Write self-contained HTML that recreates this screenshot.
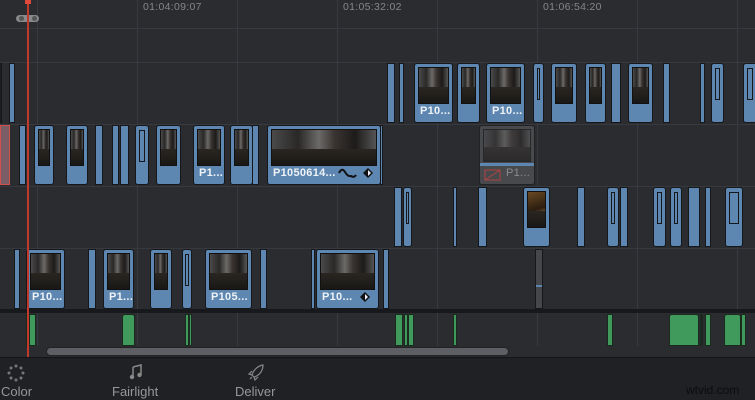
<!DOCTYPE html>
<html><head><meta charset="utf-8"><style>
*{margin:0;padding:0;box-sizing:border-box}
body{width:755px;height:400px;overflow:hidden;background:#2b2c30;position:relative;font-family:"Liberation Sans",sans-serif}
.a{position:absolute}
.g{position:absolute;top:0;width:1px;height:346px;background:#393a3f}
.h{position:absolute;left:0;width:755px;height:1px;background:#38393e}
.tc{position:absolute;top:1px;font-size:10.5px;color:#85868a;letter-spacing:.3px}
.c{position:absolute;background:#5d86b0;border:1px solid #15171b;border-radius:3px;height:60px}
.b{position:absolute;background:#5d86b0;border:1px solid #15171b;height:60px}
.t4{top:63px}.t3{top:125px}.t2{top:187px}.t1{top:249px}
.th{position:absolute;left:3px;right:3px;top:3px;height:37px;border:1px solid #111;background:linear-gradient(90deg,#4a4a4b 0%,#2a2827 25%,#6b6a68 45%,#3a3431 60%,#1d1b1a 80%,#555 100%)}
.th::after{content:"";position:absolute;left:0;right:0;bottom:0;height:45%;background:linear-gradient(#2a2622,#1a1816)}
.in{position:absolute;left:3px;right:3px;top:4px;height:32px;border:1px solid #15171b}
.l{position:absolute;left:5px;top:41px;color:#eef2f6;font-size:11px;font-weight:bold;letter-spacing:.3px}
.gr{position:absolute;top:314px;height:32px;background:#3f9a5c;border:1px solid #1a2a1e}
.nav{position:absolute;top:384px;font-size:13px;color:#96979b}
</style></head><body>
<div class="g" style="left:37px"></div><div class="g" style="left:137px"></div><div class="g" style="left:237px"></div><div class="g" style="left:337px"></div><div class="g" style="left:437px"></div><div class="g" style="left:537px"></div><div class="g" style="left:637px"></div><div class="g" style="left:737px"></div>
<div class="h" style="top:28px"></div><div class="h" style="top:62px"></div><div class="h" style="top:124px"></div><div class="h" style="top:186px"></div><div class="h" style="top:248px"></div>
<div class="tc" style="left:143px">01:04:09:07</div>
<div class="tc" style="left:343px">01:05:32:02</div>
<div class="tc" style="left:543px">01:06:54:20</div>
<div class="a" style="left:16px;top:15px;width:23px;height:7px;border-radius:4px;background:#88898c"></div>
<div class="a" style="left:19px;top:16px;width:5px;height:5px;border-radius:3px;background:#555"></div>
<div class="a" style="left:32px;top:16px;width:5px;height:5px;border-radius:3px;background:#555"></div>

<div class="b t4" style="left:-2px;width:4px;background:#1c1d20"></div>
<div class="b t4" style="left:9px;width:6px"></div>
<div class="b t4" style="left:387px;width:8px"></div>
<div class="b t4" style="left:399px;width:5px"></div>
<div class="c t4" style="left:414px;width:39px"><div class="th"></div><div class="l">P10...</div></div>
<div class="c t4" style="left:457px;width:23px"><div class="th"></div></div>
<div class="c t4" style="left:486px;width:39px"><div class="th"></div><div class="l">P10...</div></div>
<div class="c t4" style="left:533px;width:11px"><div class="in"></div></div>
<div class="c t4" style="left:551px;width:26px"><div class="th"></div></div>
<div class="c t4" style="left:585px;width:21px"><div class="th"></div></div>
<div class="b t4" style="left:611px;width:10px"></div>
<div class="c t4" style="left:628px;width:25px"><div class="th"></div></div>
<div class="b t4" style="left:663px;width:7px"></div>
<div class="b t4" style="left:700px;width:5px"></div>
<div class="c t4" style="left:711px;width:13px"><div class="in"></div></div>
<div class="c t4" style="left:743px;width:14px"><div class="in"></div></div>

<div class="b t3" style="left:0;width:10px;background:#7b5d66;border-color:#d05050"></div>
<div class="b t3" style="left:19px;width:7px"></div>
<div class="c t3" style="left:34px;width:20px"><div class="th"></div></div>
<div class="c t3" style="left:66px;width:22px"><div class="th"></div></div>
<div class="b t3" style="left:95px;width:8px"></div>
<div class="b t3" style="left:112px;width:7px"></div>
<div class="b t3" style="left:120px;width:9px"></div>
<div class="c t3" style="left:135px;width:14px"><div class="in"></div></div>
<div class="c t3" style="left:156px;width:25px"><div class="th"></div></div>
<div class="c t3" style="left:193px;width:32px"><div class="th"></div><div class="l">P1...</div></div>
<div class="c t3" style="left:230px;width:23px"><div class="th"></div></div>
<div class="b t3" style="left:252px;width:7px"></div>
<div class="c t3" style="left:267px;width:114px"><div class="th"></div><div class="l">P1050614...</div>
<svg class="a" style="left:70px;top:41px" width="20" height="14" viewBox="0 0 20 14"><path d="M1 6 Q4 0 7 5 T13 9 Q16 11 18 8" stroke="#111" stroke-width="2" fill="none"/></svg>
<svg class="a" style="left:94px;top:41px" width="12" height="12" viewBox="0 0 12 12"><path d="M6 1 L11 6 L6 11 L1 6Z" fill="#111"/><path d="M6 3 L9 6 L6 9Z" fill="#eef"/></svg></div>
<div class="b t3" style="left:380px;width:3px"></div>
<div class="c t3" style="left:479px;width:56px;background:#48494d;border-color:#222"><div class="th" style="opacity:.6;height:33px"></div><div class="a" style="left:0;right:0;top:37px;height:3px;background:#5d86b0"></div>
<svg class="a" style="left:4px;top:43px" width="18" height="12"><rect x="1" y="1" width="15" height="10" fill="none" stroke="#b04444"/><path d="M1 11 L16 1" stroke="#b04444"/></svg><div class="l" style="left:26px;color:#8a8b8f;font-weight:normal">P1...</div></div>

<div class="b t2" style="left:394px;width:8px"></div>
<div class="c t2" style="left:403px;width:9px"><div class="in" style="left:2px;right:2px"></div></div>
<div class="b t2" style="left:453px;width:4px"></div>
<div class="b t2" style="left:478px;width:9px"></div>
<div class="c t2" style="left:523px;width:27px"><div class="th" style="background:linear-gradient(160deg,#6b4a22,#2b1d10 50%,#8c6a3a 70%,#1c140c)"></div></div>
<div class="b t2" style="left:577px;width:8px"></div>
<div class="c t2" style="left:607px;width:12px"><div class="in"></div></div>
<div class="b t2" style="left:620px;width:8px"></div>
<div class="c t2" style="left:653px;width:13px"><div class="in"></div></div>
<div class="c t2" style="left:670px;width:12px"><div class="in"></div></div>
<div class="b t2" style="left:688px;width:12px"></div>
<div class="b t2" style="left:705px;width:6px"></div>
<div class="c t2" style="left:725px;width:18px"><div class="in"></div></div>

<div class="b t1" style="left:14px;width:6px"></div>
<div class="c t1" style="left:26px;width:39px"><div class="th"></div><div class="l">P10...</div></div>
<div class="b t1" style="left:88px;width:8px"></div>
<div class="c t1" style="left:103px;width:31px"><div class="th"></div><div class="l">P1...</div></div>
<div class="c t1" style="left:150px;width:22px"><div class="th"></div></div>
<div class="c t1" style="left:182px;width:10px"><div class="in" style="left:2px;right:2px"></div></div>
<div class="c t1" style="left:205px;width:47px"><div class="th"></div><div class="l">P105...</div></div>
<div class="b t1" style="left:260px;width:7px"></div>
<div class="b t1" style="left:311px;width:4px"></div>
<div class="c t1" style="left:316px;width:63px"><div class="th"></div><div class="l">P10...</div>
<svg class="a" style="left:42px;top:41px" width="12" height="12" viewBox="0 0 12 12"><path d="M6 1 L11 6 L6 11 L1 6Z" fill="#111"/><path d="M6 3 L9 6 L6 9Z" fill="#eef"/></svg></div>
<div class="b t1" style="left:383px;width:6px"></div>
<div class="b t1" style="left:535px;width:8px;background:#46474b"></div>
<div class="a" style="left:536px;top:285px;width:6px;height:2px;background:#5d86b0"></div>

<div class="a" style="left:0;top:309px;width:755px;height:4px;background:#18191c"></div>
<div class="gr" style="left:26px;width:3px"></div><div class="gr" style="left:29px;width:7px"></div>
<div class="gr" style="left:122px;width:13px;border-radius:3px 3px 0 0"></div>
<div class="gr" style="left:185px;width:4px"></div><div class="gr" style="left:189px;width:3px"></div>
<div class="gr" style="left:395px;width:8px"></div><div class="gr" style="left:404px;width:4px"></div><div class="gr" style="left:408px;width:6px"></div>
<div class="gr" style="left:453px;width:4px"></div>
<div class="gr" style="left:607px;width:6px"></div>
<div class="gr" style="left:669px;width:30px;border-radius:3px 3px 0 0"></div>
<div class="gr" style="left:700px;width:3px;background:#222"></div>
<div class="gr" style="left:705px;width:6px"></div>
<div class="gr" style="left:724px;width:17px;border-radius:3px 3px 0 0"></div>
<div class="gr" style="left:741px;width:5px"></div>
<div class="a" style="left:46px;top:347px;width:463px;height:9px;border-radius:5px;background:#5e5f64;border:1px solid #222"></div>
<div class="a" style="left:0;top:357px;width:755px;height:43px;background:#202125;border-top:1px solid #141518"></div>
<div class="a" style="left:27px;top:0;width:2px;height:357px;background:#c0392b"></div>
<div class="a" style="left:25px;top:0;width:6px;height:4px;background:#e04a3a"></div>
<svg class="a" style="left:7px;top:364px" width="18" height="18"><g fill="#777"><circle cx="9" cy="2" r="1.5"/><circle cx="14" cy="4" r="1.5"/><circle cx="16" cy="9" r="1.5"/><circle cx="14" cy="14" r="1.5"/><circle cx="9" cy="16" r="1.5"/><circle cx="4" cy="14" r="1.5"/><circle cx="2" cy="9" r="1.5"/><circle cx="4" cy="4" r="1.5"/></g></svg>
<div class="nav" style="left:1px">Color</div>
<svg class="a" style="left:129px;top:364px" width="14" height="16"><path d="M4 3 L12 1 L12 11 M4 3 L4 13" stroke="#888" stroke-width="1.5" fill="none"/><circle cx="3" cy="13" r="2.2" fill="#888"/><circle cx="10.5" cy="11" r="2.2" fill="#888"/></svg>
<div class="nav" style="left:112px">Fairlight</div>
<svg class="a" style="left:247px;top:364px" width="18" height="18"><path d="M16 1 C10 2 6 7 5 11 L7 13 C11 12 16 8 16 1Z M5 11 L2 10 L5 7 M7 13 L8 16 L11 13 M3 15 L5 13" stroke="#888" stroke-width="1.2" fill="none"/></svg>
<div class="nav" style="left:235px">Deliver</div>
<div class="a" style="left:686px;top:383px;font-size:12px;color:#0c0c0c">wtvid.com</div>
</body></html>
